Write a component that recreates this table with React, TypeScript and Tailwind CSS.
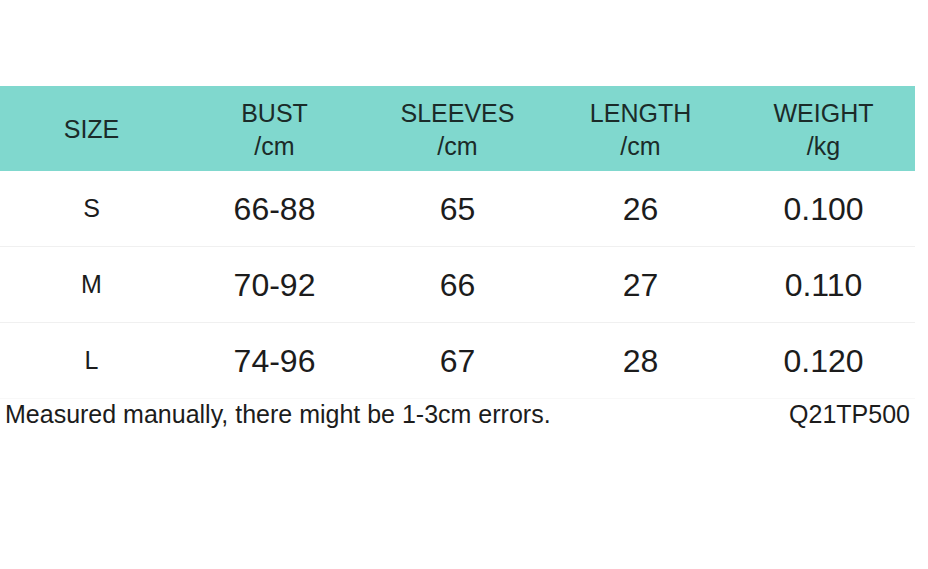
const headers = [
  ['SIZE'],
  ['BUST', '/cm'],
  ['SLEEVES', '/cm'],
  ['LENGTH', '/cm'],
  ['WEIGHT', '/kg'],
]

const rows = [
  ['S', '66-88', '65', '26', '0.100'],
  ['M', '70-92', '66', '27', '0.110'],
  ['L', '74-96', '67', '28', '0.120'],
]

export default function App() {
  return (
    <div
      className="w-[928px] h-[569px] bg-white pt-[86px] text-[#1c1c1c]"
      style={{ fontFamily: '"Liberation Sans", Arial, sans-serif' }}
    >
      <div className="w-[915px]">
        {/* header */}
        <div className="grid grid-cols-5 h-[85px] pt-[2px] bg-[#80d8ce] text-[#1b2b29]">
          {headers.map((h) => (
            <div key={h[0]} className="flex flex-col items-center justify-center text-[25px] leading-[33px]">
              {h.map((line) => (
                <span key={line}>{line}</span>
              ))}
            </div>
          ))}
        </div>

        {/* rows */}
        {rows.map((r, ri) => (
          <div
            key={r[0]}
            className={`grid grid-cols-5 h-[76px] pt-[1px] border-b ${ri === rows.length - 1 ? 'border-[#f8f8f8]' : 'border-[#f0f0f0]'}`}
          >
            {r.map((cell, i) => (
              <div
                key={i}
                className={`flex items-center justify-center ${i === 0 ? 'text-[25px]' : 'text-[32px]'}`}
              >
                {cell}
              </div>
            ))}
          </div>
        ))}

        {/* note */}
        <div className="flex justify-between pl-[5px] pr-[5px] text-[25px] leading-[30px]">
          <span>Measured manually, there might be 1-3cm errors.</span>
          <span>Q21TP500</span>
        </div>
      </div>
    </div>
  )
}
